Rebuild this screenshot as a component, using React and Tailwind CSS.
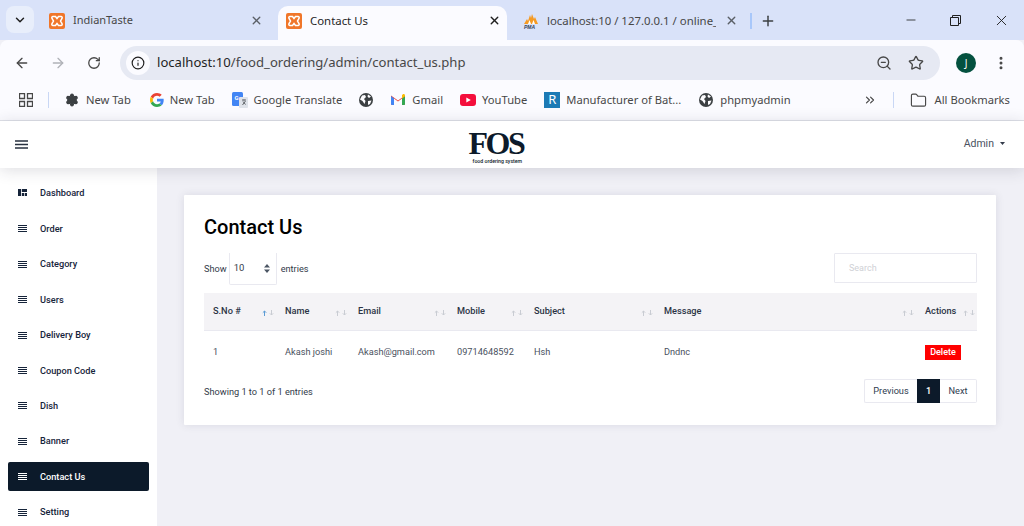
import React from 'react';
import { ArrowLeft, ArrowRight, RotateCw, Info, ZoomOut, Star, Folder, ChevronDown, X, Plus, Minus, MoreVertical, ChevronsRight, Settings } from 'lucide-react';

function Xampp() {
  return (
    <svg width="16" height="16" viewBox="0 0 16 16" className="shrink-0">
      <rect width="16" height="16" rx="2" fill="#f0762a" />
      <path d="M4 3.5h2.5L8 5.5l1.5-2H12c1 0 1.5 1 1 2L11.5 8l1.5 2.5c.5 1 0 2-1 2H9.5L8 10.5l-1.5 2H4c-1 0-1.5-1-1-2L4.5 8 3 5.5c-.5-1 0-2 1-2z" fill="none" stroke="#fff" strokeWidth="1.5" />
    </svg>
  );
}

function Pma() {
  return (
    <svg width="16" height="16" viewBox="0 0 16 16" className="shrink-0">
      <path d="M1 11 L4 6 L5 8 L7 2 L8 5 L9 1 L11 6 L12 4 L15 11 Z" fill="#f59a23" />
      <path d="M5 11 L6.5 7 L8 11 Z M9 11 L10.5 7 L12 11 Z" fill="#fff" />
      <text x="1" y="15.5" fontSize="5" fontWeight="700" fontStyle="italic" fill="#33415c" fontFamily="Liberation Sans, sans-serif">PMA</text>
    </svg>
  );
}

function Globe() {
  return (
    <svg width="14" height="14" viewBox="0 0 14 14" className="shrink-0">
      <circle cx="7" cy="7" r="7" fill="#3c4043" />
      <path d="M3 2.5 L6 2 L7 4 L5 6 L6.5 8 L5.5 11 L3.5 8 L1 6.5 Z M9 1.5 L12 3.5 L10 5 L8.5 3.5 Z M9 8 L12.5 7.5 L11 11 L9 12 Z" fill="#fdfcff" />
    </svg>
  );
}

function GoogleG() {
  return (
    <svg width="14" height="14" viewBox="0 0 48 48" className="shrink-0">
      <path fill="#EA4335" d="M24 9.5c3.5 0 6.7 1.2 9.2 3.6l6.9-6.9C35.9 2.4 30.5 0 24 0 14.6 0 6.5 5.4 2.6 13.2l8 6.2C12.5 13.6 17.8 9.5 24 9.5z" />
      <path fill="#4285F4" d="M46.9 24.5c0-1.6-.1-3.1-.4-4.5H24v9h12.9c-.6 3-2.2 5.5-4.7 7.2l7.7 6c4.5-4.2 7-10.3 7-17.7z" />
      <path fill="#FBBC05" d="M10.5 28.6c-.5-1.4-.8-3-.8-4.6s.3-3.2.8-4.6l-8-6.2C.9 16.5 0 20.1 0 24s.9 7.5 2.6 10.8l7.9-6.2z" />
      <path fill="#34A853" d="M24 48c6.5 0 11.9-2.1 15.9-5.8l-7.7-6c-2.2 1.5-4.9 2.3-8.2 2.3-6.2 0-11.5-4.2-13.4-9.8l-8 6.2C6.5 42.6 14.6 48 24 48z" />
    </svg>
  );
}

function Translate() {
  return (
    <svg width="16" height="16" viewBox="0 0 16 16" className="shrink-0">
      <rect x="0" y="0" width="11" height="14" rx="1.5" fill="#4285f4" />
      <rect x="7" y="5" width="9" height="11" rx="1" fill="#dfe3ea" />
      <text x="2.5" y="8" fontSize="6" fontWeight="700" fill="#fff" fontFamily="Roboto, sans-serif">G</text>
      <path d="M10 8h4M12 7.5v1M10.5 13l3-4M11 9.5l2.5 3" stroke="#5f6368" strokeWidth="1" fill="none" />
    </svg>
  );
}

function GmailIcon() {
  return (
    <svg width="14" height="11" viewBox="0 0 14 11" className="shrink-0">
      <path d="M0 1.5 L7 6.5 L14 1.5 V10 a1 1 0 0 1-1 1 H11 V4.5 L7 7.5 L3 4.5 V11 H1 a1 1 0 0 1-1-1 Z" fill="#ea4335" />
      <path d="M0 2v8a1 1 0 0 0 1 1h2V4.5z" fill="#4285f4" />
      <path d="M14 2v8a1 1 0 0 1-1 1h-2V4.5z" fill="#34a853" />
      <path d="M11 1 L11 4.5 L14 2.3 V1.5 C14 .3 12.6-.3 11.7.4z" fill="#fbbc05" />
    </svg>
  );
}

function YoutubeIcon() {
  return (
    <svg width="16" height="12" viewBox="0 0 16 12" className="shrink-0">
      <rect width="16" height="12" rx="3" fill="#f40f3c" />
      <path d="M6.3 3.5 L10.8 6 L6.3 8.5 Z" fill="#fff" />
    </svg>
  );
}

function Bookmark({ icon, label, className, gap }) {
  return (
    <div className={`flex shrink-0 items-center text-[11.2px] text-[#474747] ${gap || 'gap-[7px]'} ${className || ''}`}>
      {icon}
      <span className="whitespace-nowrap">{label}</span>
    </div>
  );
}

function BrowserChrome() {
  return (
    <div className="font-['Noto_Sans',sans-serif]">
      <div className="flex h-[40px] items-end bg-[#d9e2f9] pl-[6px]">
        <div className="mb-[7px] mr-[15px] flex h-[27px] w-[28px] items-center justify-center rounded-[8px] bg-[#e8eefb]">
          <ChevronDown size={14} strokeWidth={2.5} color="#1f1f1f" />
        </div>
        <div className="flex h-[34px] w-[229px] items-center pb-[5px] text-[#474747]">
          <Xampp />
          <span className="ml-[8px] flex-1 text-[11px]">IndianTaste</span>
          <X size={13} strokeWidth={2.5} color="#5a5f66" className="mr-[15px]" />
        </div>
        <div className="flex h-[34px] w-[229px] items-center rounded-t-[10px] bg-[#fbfbff] pb-[5px] pl-[8px] text-[#1f1f1f]">
          <Xampp />
          <span className="ml-[8px] flex-1 text-[11.4px]">Contact Us</span>
          <X size={13} strokeWidth={2.5} color="#1f1f1f" className="mr-[6px]" />
        </div>
        <div className="ml-[16px] flex h-[34px] w-[260px] shrink-0 items-center pb-[5px] text-[#474747]">
          <Pma />
          <span className="ml-[8px] w-[169px] shrink-0 overflow-hidden whitespace-nowrap text-[11.4px]">localhost:10 / 127.0.0.1 / online_</span>
          <X size={13} strokeWidth={2.5} color="#5a5f66" className="ml-[9px] shrink-0" />
          <div className="ml-[12px] h-[16px] w-[2px] shrink-0 bg-[#a8c7fa]" />
          <Plus size={16} strokeWidth={2.2} color="#3c4043" className="ml-[8px] shrink-0" />
        </div>
        <div className="ml-auto flex h-[40px] items-center">
          <Minus size={14} strokeWidth={1.4} color="#1f1f1f" className="mr-[32px]" />
          <svg width="11" height="11" viewBox="0 0 11 11" className="mr-[32px]">
            <path d="M.5 2.5h8v8h-8zM2.5 2.5v-2h8v8h-2" fill="none" stroke="#1f1f1f" />
          </svg>
          <X size={17} strokeWidth={1.3} color="#1f1f1f" className="mr-[14px]" />
        </div>
      </div>
      <div className="flex h-[46px] items-center rounded-t-[8px] bg-[#fbfbff] pl-[14px]">
        <ArrowLeft size={16} strokeWidth={2} color="#474747" />
        <ArrowRight size={16} strokeWidth={2} color="#b0b2b8" className="ml-[20px]" />
        <RotateCw size={14} strokeWidth={2.2} color="#474747" className="ml-[21px]" />
        <div className="ml-[19px] flex h-[34px] w-[820px] items-center rounded-full bg-[#e6e9f3] pl-[6px]">
          <div className="flex h-[24px] w-[24px] items-center justify-center rounded-full bg-[#fbfbff]">
            <Info size={14} strokeWidth={2} color="#1f1f1f" />
          </div>
          <span className="ml-[7px] text-[13.1px] text-[#1f1f1f]">localhost:10<span className="text-[#474747]">/food_ordering/admin/contact_us.php</span></span>
          <ZoomOut size={16} strokeWidth={2} color="#474747" className="ml-auto" />
          <Star size={16} strokeWidth={2} color="#474747" className="ml-[16px] mr-[16px]" />
        </div>
        <div className="ml-[16px] flex h-[20px] w-[20px] items-center justify-center rounded-full bg-[#04513f] text-[10px] text-white">J</div>
        <MoreVertical size={16} strokeWidth={2.5} color="#474747" className="ml-[17px]" />
      </div>
      <div className="flex h-[35px] items-center border-b border-[#dfe1e8] bg-[#fbfbff] pb-[6px] pl-[19px]">
        <svg width="14" height="14" viewBox="0 0 14 14" className="shrink-0">
          <path d="M.5.5h5v5h-5zM8.5.5h5v5h-5zM.5 8.5h5v5h-5zM8.5 8.5h5v5h-5z" fill="none" stroke="#474747" strokeWidth="1.3" />
        </svg>
        <div className="ml-[15px] mr-[16px] h-[16px] w-px bg-[#c9d7f5]" />
        <Bookmark icon={<Settings size={14} fill="#3c4043" color="#3c4043" strokeWidth={2} />} label="New Tab" />
        <Bookmark className="ml-[19px]" gap="gap-[6px]" icon={<GoogleG />} label="New Tab" />
        <Bookmark className="ml-[17px]" gap="gap-[6px]" icon={<Translate />} label="Google Translate" />
        <div className="ml-[17px]"><Globe /></div>
        <Bookmark className="ml-[18px]" icon={<GmailIcon />} label="Gmail" />
        <Bookmark className="ml-[17px]" gap="gap-[6px]" icon={<YoutubeIcon />} label="YouTube" />
        <Bookmark className="ml-[17px]" gap="gap-[6px]" icon={<div className="flex h-[16px] w-[16px] items-center justify-center bg-[#1c7ab5] text-[13px] leading-none text-white">R</div>} label="Manufacturer of Bat..." />
        <Bookmark className="ml-[18px]" icon={<Globe />} label="phpmyadmin" />
        <ChevronsRight size={14} strokeWidth={2} color="#474747" className="ml-[72px] shrink-0" />
        <div className="ml-[16px] h-[16px] w-px shrink-0 bg-[#c9d7f5]" />
        <Bookmark className="ml-[16px]" gap="gap-[8px]" icon={<Folder size={17} strokeWidth={1.6} color="#474747" />} label="All Bookmarks" />
      </div>
    </div>
  );
}

function NavIcon({ dashboard }) {
  if (dashboard) {
    return (
      <svg width="9" height="7" viewBox="0 0 9 7" className="shrink-0">
        <path d="M0 0h3v7H0zM3.8 0H9v3H3.8zM3.8 4h2.3v3H3.8zM6.8 4H9v3H6.8z" fill="currentColor" />
      </svg>
    );
  }
  return (
    <svg width="9" height="7" viewBox="0 0 9 7" className="shrink-0">
      <path d="M0 .5h9M0 2.5h9M0 4.5h9M0 6.5h9" stroke="currentColor" strokeWidth="1" />
    </svg>
  );
}

const navItems = ['Dashboard', 'Order', 'Category', 'Users', 'Delivery Boy', 'Coupon Code', 'Dish', 'Banner', 'Contact Us', 'Setting'];

function Sidebar() {
  return (
    <div className="flex w-[157px] shrink-0 flex-col gap-[6.4px] bg-white px-[8px] pt-[10px]">
      {navItems.map((item, i) => (
        <div
          key={item}
          className={`flex h-[29px] shrink-0 items-center gap-[13px] rounded-[2px] pl-[10px] text-[9.2px] font-medium ${item === 'Contact Us' ? 'bg-[#0c1a2a] text-white' : 'text-[#16243a]'} ${i === 0 ? 'mb-[1px]' : ''}`}
        >
          <span className="w-[9px]"><NavIcon dashboard={i === 0} /></span>
          {item}
        </div>
      ))}
    </div>
  );
}

function SortArrows({ up }) {
  return (
    <svg width="12" height="6" viewBox="0 0 12 6" className="shrink-0">
      <path d="M2.5 6V1M.8 2.7 2.5 1 4.2 2.7" fill="none" stroke={up ? '#5b9bd5' : '#c9ccd3'} strokeWidth="1" />
      <path d="M9.5 0V5M7.8 3.3 9.5 5 11.2 3.3" fill="none" stroke="#c9ccd3" strokeWidth="1" />
    </svg>
  );
}

const columns = [
  { name: 'S.No #', w: 'w-[72px]', up: true },
  { name: 'Name', w: 'w-[73px]' },
  { name: 'Email', w: 'w-[99px]' },
  { name: 'Mobile', w: 'w-[77px]' },
  { name: 'Subject', w: 'w-[130px]' },
  { name: 'Message', w: 'w-[261px]' },
  { name: 'Actions', w: 'w-[61px]' },
];

const row = ['1', 'Akash joshi', 'Akash@gmail.com', '09714648592', 'Hsh', 'Dndnc'];

function ContactCard() {
  return (
    <div className="h-[230px] w-[812px] rounded-[1px] bg-white pl-[20px] pr-[19px] pt-[20px] shadow-[0_0_8px_rgba(60,60,90,0.12)]">
      <h1 className="text-[20px] font-medium leading-[24px] text-black">Contact Us</h1>
      <div className="mt-[14px] flex h-[32px] items-center text-[9.2px] text-[#333b4a]">
        Show
        <div className="ml-[2px] flex h-[32px] w-[48px] items-center justify-between self-start rounded-b-[2px] border-x border-b border-[#e9e9f0] pl-[4px] pr-[6px] text-[9.5px]">
          10
          <svg width="6" height="9" viewBox="0 0 6 9"><path d="M3 0 6 3.5H0zM3 9 0 5.5H6z" fill="#4b5563" /></svg>
        </div>
        <span className="ml-[4px]">entries</span>
        <div className="mb-[2px] ml-auto flex h-[30px] w-[143px] items-center rounded-[1px] border border-[#e9e9f0] pl-[14px] pt-[1px] text-[9px] text-[#cfd1d6]">Search</div>
      </div>
      <table className="mt-[8px] w-[773px] table-fixed border-collapse text-[9.2px]">
        <thead>
          <tr className="h-[37px] border-b border-[#e9e9f0] bg-[#f4f3f6]">
            {columns.map((c) => (
              <th key={c.name} className={`${c.w} p-0 pl-[9px] text-left font-medium text-[#2b3445]`}>
                <div className="flex items-center justify-between pr-[2px]">
                  {c.name}
                  <span className="mt-[3px]"><SortArrows up={c.up} /></span>
                </div>
              </th>
            ))}
          </tr>
        </thead>
        <tbody>
          <tr className="h-[44px] text-[#4a5160]">
            {row.map((v, i) => (
              <td key={i} className="whitespace-nowrap p-0 pl-[9px]">{v}</td>
            ))}
            <td className="p-0 pl-[9px]">
              <button className="flex h-[15px] w-[36px] items-center justify-center bg-[#ff0000] text-[9px] font-medium text-white">Delete</button>
            </td>
          </tr>
        </tbody>
      </table>
      <div className="mt-[5px] flex items-center justify-between text-[9.2px] text-[#333b4a]">
        <span className="pt-[2px]">Showing 1 to 1 of 1 entries</span>
        <div className="flex h-[24px] items-stretch">
          <div className="flex w-[53px] items-center justify-center rounded-l-[2px] border border-r-0 border-[#e9e9f0] text-[#2f3c50]">Previous</div>
          <div className="flex w-[23px] items-center justify-center bg-[#0c1a2a] font-medium text-white">1</div>
          <div className="flex w-[37px] items-center justify-center rounded-r-[2px] border border-l-0 border-[#e9e9f0] text-[#2f3c50]">Next</div>
        </div>
      </div>
    </div>
  );
}

export default function App() {
  return (
    <div className="flex h-[526px] w-[1024px] flex-col overflow-hidden bg-[#f0f0f6]">
      <BrowserChrome />
      <div className="font-['Roboto',sans-serif]">
        <div className="relative z-10 flex h-[47px] items-center justify-between bg-white pl-[15px] pr-[19px] shadow-[0_2px_16px_rgba(40,40,60,0.16)]">
          <svg width="13" height="9" viewBox="0 0 13 9">
            <path d="M0 1h13M0 4.5h13M0 8h13" stroke="#27303f" strokeWidth="1.3" />
          </svg>
          <div className="flex flex-col items-center pt-[4px] text-[#0c1a2a]">
            <span className="font-['Liberation_Serif',serif] text-[32px] font-bold leading-[28px] tracking-[-2.5px]">FOS</span>
            <span className="pl-[3px] text-[5.2px] font-medium leading-[8px]">food ordering system</span>
          </div>
          <div className="mb-[2px] flex items-center gap-[6px] text-[10.5px] text-[#4a5160]">
            Admin
            <svg width="5" height="3" viewBox="0 0 5 3"><path d="M0 0h5L2.5 3z" fill="#333b4a" /></svg>
          </div>
        </div>
        <div className="flex h-[358px]">
          <Sidebar />
          <div className="flex-1 pl-[27px] pt-[27px]">
            <ContactCard />
          </div>
        </div>
      </div>
    </div>
  );
}
